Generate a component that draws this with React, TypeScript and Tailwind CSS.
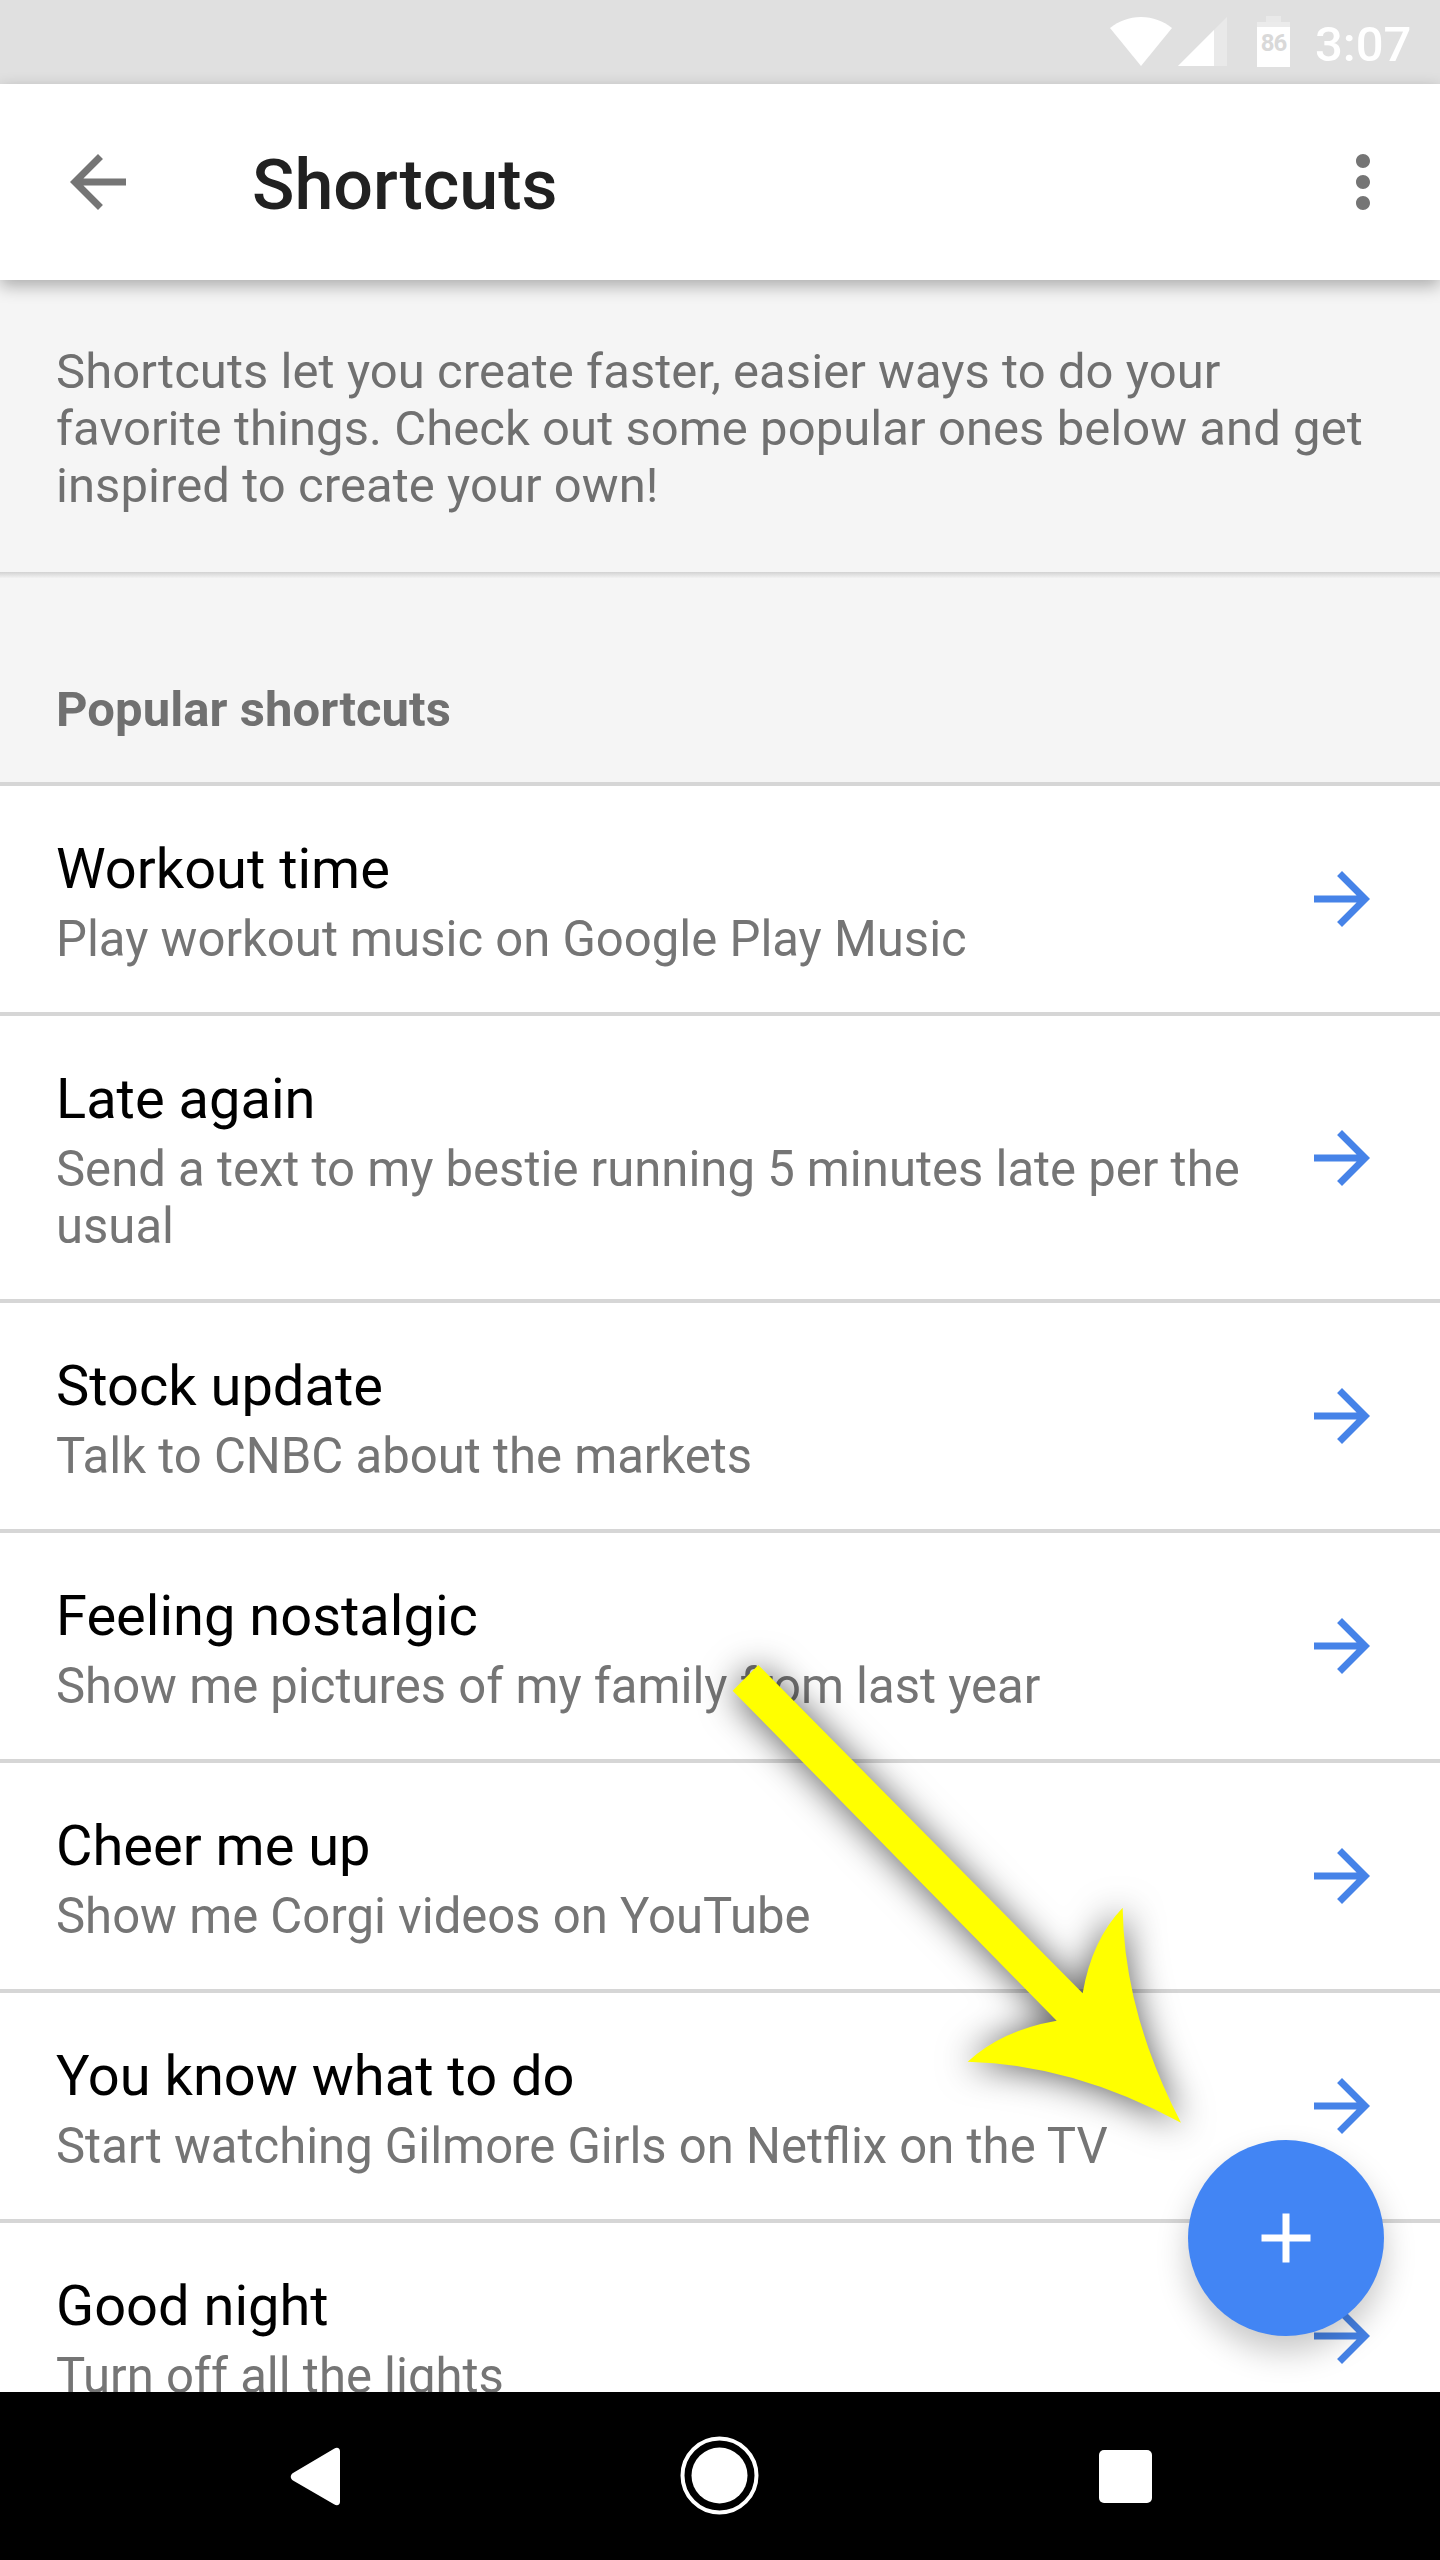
import React from 'react';

const shortcuts = [
  { title: 'Workout time', description: 'Play workout music on Google Play Music' },
  { title: 'Late again', description: 'Send a text to my bestie running 5 minutes late per the usual' },
  { title: 'Stock update', description: 'Talk to CNBC about the markets' },
  { title: 'Feeling nostalgic', description: 'Show me pictures of my family from last year' },
  { title: 'Cheer me up', description: 'Show me Corgi videos on YouTube' },
  { title: 'You know what to do', description: 'Start watching Gilmore Girls on Netflix on the TV' },
  { title: 'Good night', description: 'Turn off all the lights' },
];

type IconProps = {
  path: string;
  className?: string;
};

function Icon({ path, className }: IconProps) {
  return (
    <svg viewBox="0 0 24 24" width="84" height="84" fill="currentColor" className={className}>
      <path d={path} />
    </svg>
  );
}

function StatusBar() {
  return (
    <div className="flex h-[84px] shrink-0 items-start bg-[#e0e0e0] pl-[1110px] text-white">
      <svg width="62" height="49" viewBox="0 0 62 49" className="mt-[17px] shrink-0">
        <path d="M0 11C9 4 19 0 31 0s22 4 31 11L31 49z" fill="currentColor" />
      </svg>
      <svg width="49" height="49" viewBox="0 0 49 49" className="mt-[17px] ml-[6px] shrink-0">
        <path d="M49 0v49H0z" fill="#e9e9e9" />
        <path d="M36 13v36H0z" fill="currentColor" />
      </svg>
      <div className="mt-4 ml-[30px] flex w-[33px] shrink-0 flex-col items-center">
        <div className="h-[6px] w-[15px] bg-[#e9e9e9]" />
        <div className="h-[5px] w-[33px] bg-[#ebebeb]" />
        <div className="flex h-10 w-[33px] justify-center bg-white text-2xl leading-[32px] font-bold tracking-[-1px] text-[#d9d9d9]">
          86
        </div>
      </div>
      <span className="mt-4 ml-[25px] text-[49px] leading-[57px] font-medium">3:07</span>
    </div>
  );
}

function Toolbar() {
  return (
    <header className="relative flex h-[196px] shrink-0 items-center bg-white pr-[35px] pl-[56px] shadow-[0_6px_16px_rgba(0,0,0,0.3)]">
      <Icon className="text-[#757575]" path="M20 11H7.83l5.59-5.59L12 4l-8 8 8 8 1.41-1.41L7.83 13H20v-2z" />
      <h1 className="ml-[112px] flex-1 pt-[5px] text-[70px] leading-[82px] font-medium text-[#212121]">Shortcuts</h1>
      <Icon
        className="text-[#757575]"
        path="M12 8c1.1 0 2-.9 2-2s-.9-2-2-2-2 .9-2 2 .9 2 2 2zm0 2c-1.1 0-2 .9-2 2s.9 2 2 2 2-.9 2-2-.9-2-2-2zm0 6c-1.1 0-2 .9-2 2s.9 2 2 2 2-.9 2-2-.9-2-2-2z"
      />
    </header>
  );
}

function ShortcutRow({ title, description }: { title: string; description: string }) {
  return (
    <li className="flex shrink-0 items-center border-b-4 border-[#d6d6d6] pr-[56px] pl-[56px]">
      <div className="flex-1 pt-[50px] pb-[44px]">
        <div className="text-[56px] leading-[66px] text-black">{title}</div>
        <div className="mt-[9px] text-[49.05px] leading-[57px] text-[#757575]">{description}</div>
      </div>
      <Icon
        className="shrink-0 text-[#4683e8]"
        path="M12 4l-1.41 1.41L16.17 11H4v2h12.17l-5.58 5.59L12 20l8-8z"
      />
    </li>
  );
}

function NavigationBar() {
  return (
    <nav className="relative flex h-[168px] shrink-0 items-center justify-center gap-[322px] bg-black text-white">
      <svg width="84" height="84" viewBox="0 0 84 84" fill="currentColor">
        <path d="M62 14.700c3.200-2 6-.7 6 2.500v50.600c0 3.200-2.800 4.500-6 2.500L21 46.500c-3-2-3-5.500 0-7.500z" />
      </svg>
      <svg width="84" height="84" viewBox="0 0 84 84">
        <circle cx="41.500" cy="41.500" r="37" fill="none" stroke="currentColor" strokeWidth="4" />
        <circle cx="41.500" cy="41.500" r="28" fill="currentColor" />
      </svg>
      <svg width="84" height="84" viewBox="0 0 84 84" fill="currentColor">
        <rect x="15" y="16" width="53" height="53" rx="5" />
      </svg>
    </nav>
  );
}

function App() {
  return (
    <div className="relative flex h-[2560px] w-[1440px] flex-col overflow-hidden bg-white font-['Roboto',sans-serif]">
      <StatusBar />
      <Toolbar />
      <main className="min-h-0 flex-1 overflow-hidden">
        <section className="h-[292px] bg-[#f5f5f5] px-[56px] pt-[63px] text-[49px] leading-[57px] tracking-[0.06px] text-[#707070]">
          Shortcuts let you create faster, easier ways to do your favorite things. Check out some popular ones below and
          get inspired to create your own!
        </section>
        <div className="h-[6px] bg-linear-to-b from-[#d2d2d2] to-[#f2f2f2]" />
        <h2 className="h-[208px] border-b-4 border-[#d6d6d6] bg-[#f5f5f5] pt-[103px] pl-[56px] text-[49px] leading-[57px] font-bold tracking-[0.06px] text-[#707070]">
          Popular shortcuts
        </h2>
        <ul>
          {shortcuts.map((shortcut) => (
            <ShortcutRow key={shortcut.title} {...shortcut} />
          ))}
        </ul>
      </main>
      <NavigationBar />

      <button className="absolute top-[2140px] left-[1188px] flex size-[196px] items-center justify-center rounded-full bg-[#4285f4] text-white shadow-[0_16px_32px_rgba(0,0,0,0.22)]">
        <Icon path="M19 13h-6v6h-2v-6H5v-2h6V5h2v6h6z" />
      </button>

      {/* callout arrow pointing at the add button */}
      <svg
        width="520"
        height="520"
        viewBox="0 0 1560 1560"
        className="absolute top-[1640px] left-[700px] overflow-visible drop-shadow-[0_2px_18px_rgba(0,0,0,0.65)]"
      >
        <path
          d="M175 75L98 152L1070 1142Q904 1171 803 1265Q1117 1272 1443 1448Q1272 1120 1268 803Q1175 900 1148 1060Z"
          fill="#ffff00"
        />
      </svg>
    </div>
  );
}

export default App;
